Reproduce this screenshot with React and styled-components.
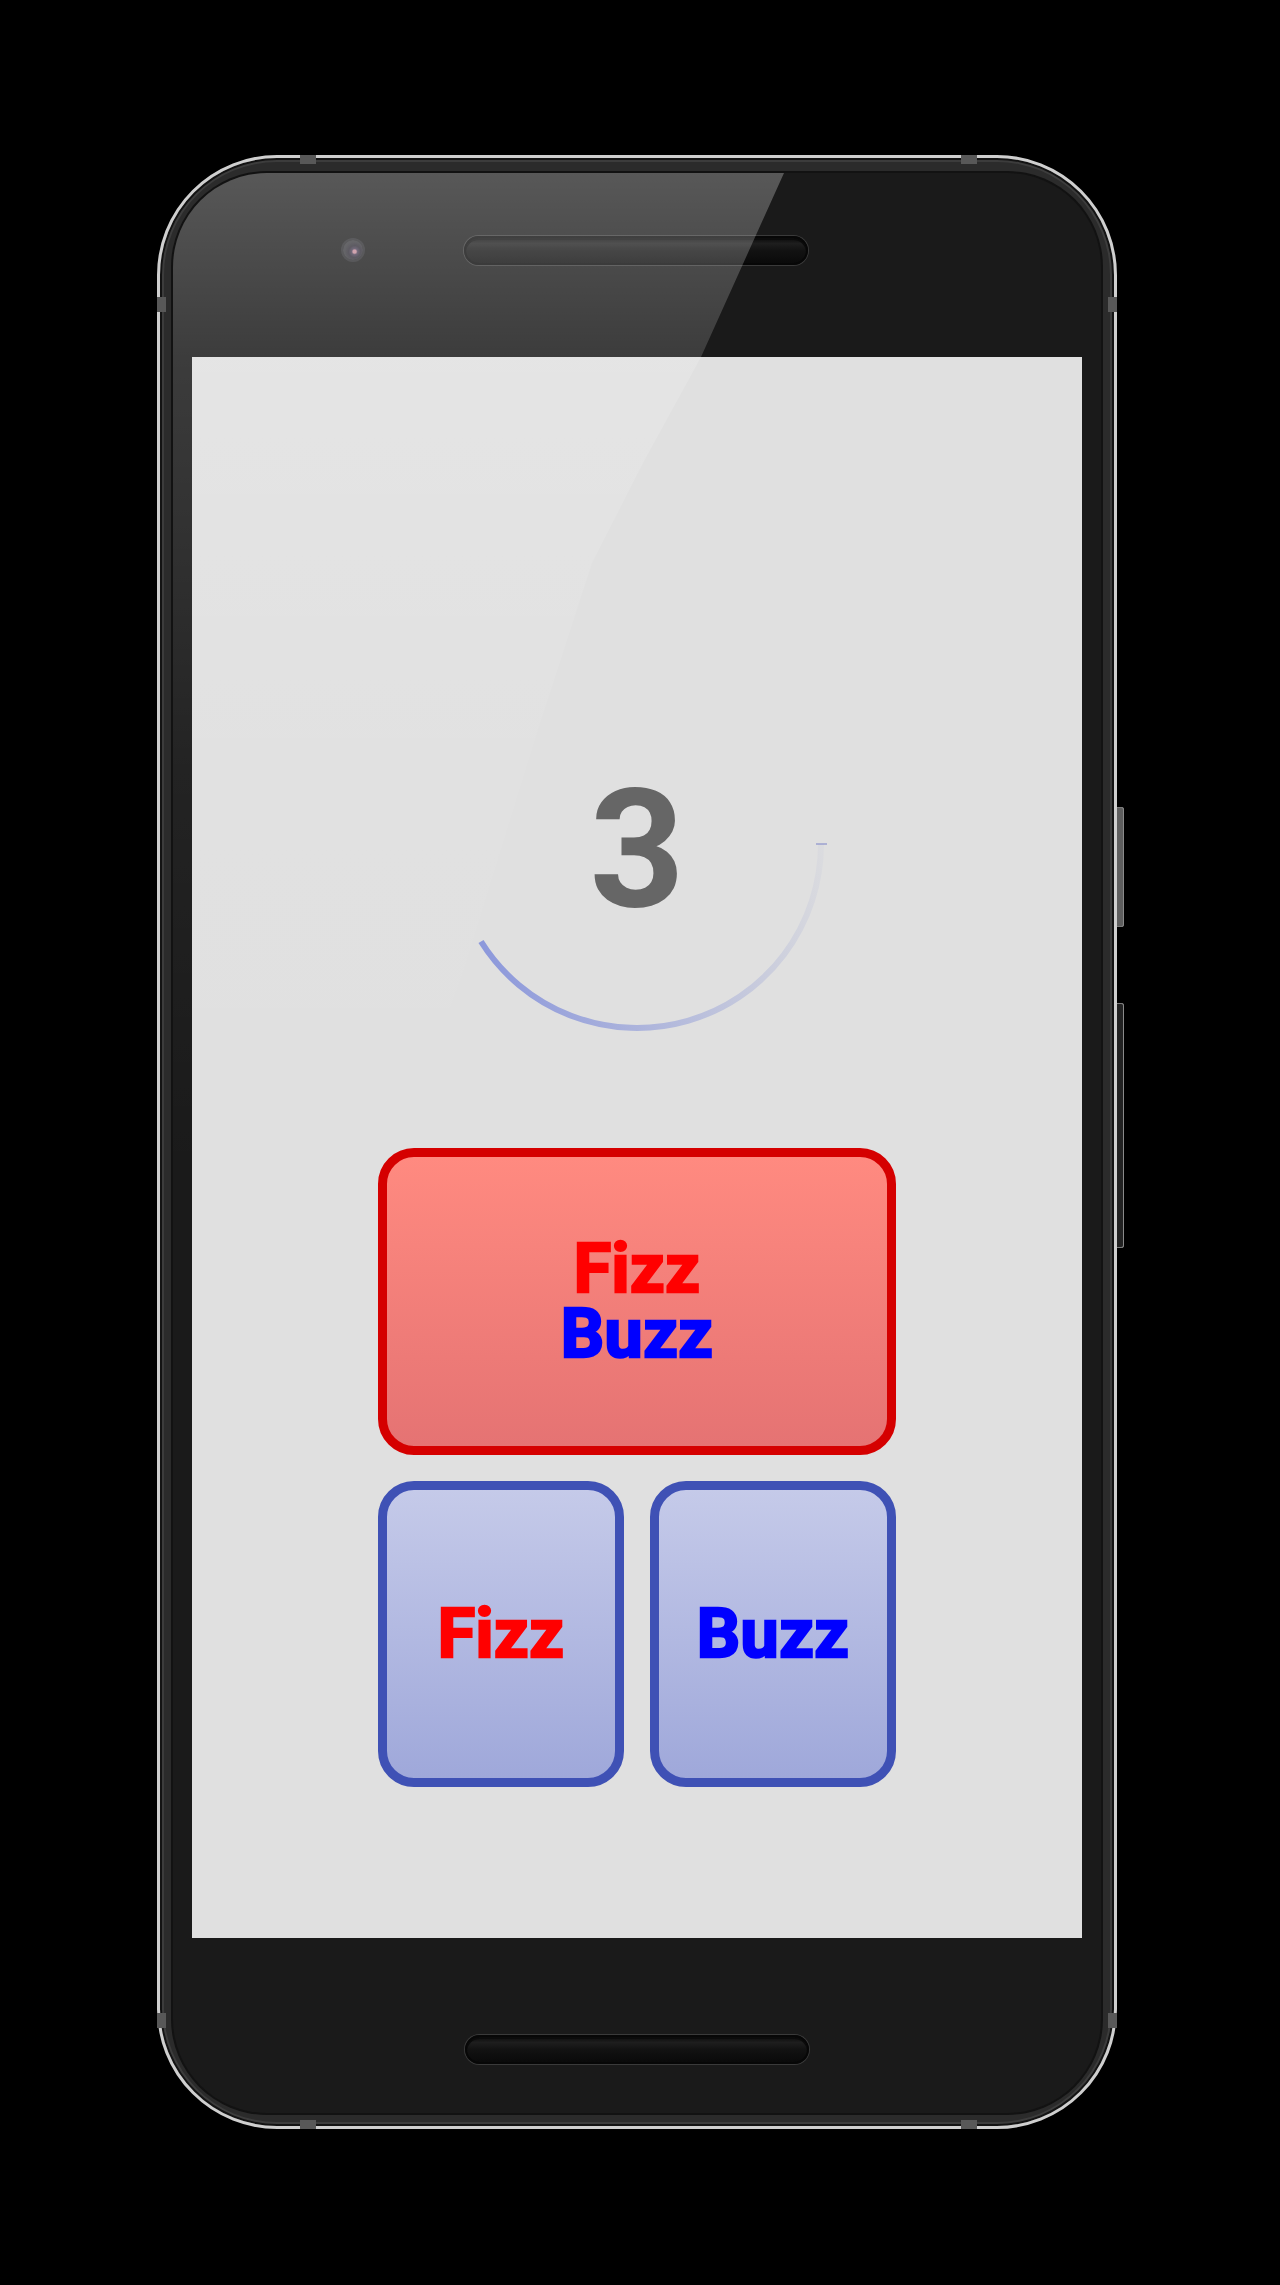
import React from "react";
import styled, { createGlobalStyle } from "styled-components";

const GlobalStyle = createGlobalStyle`
  html, body {
    margin: 0;
    padding: 0;
    background: #000;
  }
  body {
    font-family: Roboto, "Liberation Sans", sans-serif;
  }
`;

const Stage = styled.div`
  box-sizing: border-box;
  width: 1280px;
  height: 2285px;
  padding: 155px 0 0 157px;
  background: #000;
  overflow: hidden;
`;

/* Device shell: silver rim, dark band, glass front */
const Phone = styled.div`
  position: relative;
  box-sizing: border-box;
  width: 960px;
  height: 1974px;
  padding: 15px 13px 13px 13px;
  border: 3px solid #cfcfcf;
  border-radius: 120px;
  background: #2b2b2b;
  box-shadow: inset 0 0 0 2px #131313, inset 0 0 0 4px #3c3c3c;
`;

const RimNotch = styled.span`
  position: absolute;
  background: #585858;
  ${({ $side }) =>
    $side === "top" || $side === "bottom"
      ? `width: 16px; height: 9px; ${$side}: -3px;`
      : `width: 9px; height: 15px; ${$side}: -3px;`}
`;

const SideKey = styled.span`
  position: absolute;
  right: -10px;
  width: 7px;
  border-radius: 0 3px 3px 0;
  background: ${({ $solid }) => ($solid ? "#5e5e5e" : "#222")};
  box-shadow: inset -1px 0 0 #8a8a8a, inset 0 1px 0 #7a7a7a, inset 0 -1px 0 #7a7a7a;
`;

const Front = styled.div`
  position: relative;
  display: flex;
  flex-direction: column;
  height: 100%;
  border-radius: 94px;
  background: #1a1a1a;
  overflow: hidden;
  box-shadow: 0 0 0 2px #121212;
`;

/* diagonal glass reflection across the upper-left of the front */
const Gloss = styled.div`
  position: absolute;
  inset: 0;
  pointer-events: none;
  background: linear-gradient(
    180deg,
    rgba(255, 255, 255, 0.27) 0,
    rgba(255, 255, 255, 0.15) 184px,
    rgba(255, 255, 255, 0.04) 600px,
    rgba(255, 255, 255, 0) 1000px
  );
  clip-path: polygon(
    0 0,
    611px 0,
    528px 184px,
    470px 290px,
    419px 390px,
    361px 569px,
    290px 800px,
    180px 1100px,
    0 1400px
  );
`;

const TopBezel = styled.div`
  box-sizing: border-box;
  display: flex;
  align-items: flex-start;
  flex-shrink: 0;
  height: 184px;
  padding: 63px 0 0 170px;
`;

const Camera = styled.span`
  width: 20px;
  height: 20px;
  margin: 4px 101px 0 0;
  border-radius: 50%;
  background: radial-gradient(
    circle at 58% 58%,
    #c48a98 0 1.5px,
    #4a3f55 3px,
    #2f2c36 6px,
    #3a3a3e 10px
  );
  box-shadow: 0 0 0 2px rgba(80, 80, 90, 0.35);
`;

const Speaker = styled.span`
  box-sizing: border-box;
  width: 344px;
  height: 29px;
  border-radius: 15px;
  border: 2px solid #070707;
  background: linear-gradient(180deg, #0b0b0b 0, #1e1e1e 22%, #121212 50%, #0a0a0a 100%);
  box-shadow: 0 0 0 1px #3a3a3a, inset 0 2px 0 #0b0b0b;
`;

const Screen = styled.main`
  box-sizing: border-box;
  display: flex;
  flex-direction: column;
  align-items: center;
  flex-shrink: 0;
  height: 1581px;
  margin: 0 19px;
  padding-top: 297px;
  background: #e0e0e0;
`;

const BottomBezel = styled.div`
  display: flex;
  justify-content: center;
  align-items: flex-start;
  flex: 1;
  padding-top: 97px;
`;

const Timer = styled.div`
  display: grid;
  place-items: center;
  width: 380px;
  height: 380px;

  & > * {
    grid-area: 1 / 1;
  }
`;

const Count = styled.span`
  margin-top: 12px;
  font-family: Roboto, "Liberation Sans", sans-serif;
  font-size: 166px;
  font-weight: 700;
  line-height: 1;
  color: #666666;
`;

const Buttons = styled.div`
  display: grid;
  grid-template-columns: 246px 246px;
  gap: 26px;
  margin-top: 114px;
`;

const tones = {
  red: { border: "#d50000", top: "#ff8a80", bottom: "#e57373" },
  blue: { border: "#3f51b5", top: "#c5cae9", bottom: "#9fa8da" },
};

const AnswerButton = styled.button`
  box-sizing: border-box;
  display: flex;
  flex-direction: column;
  align-items: center;
  justify-content: center;
  grid-column: ${({ $wide }) => ($wide ? "1 / span 2" : "auto")};
  height: ${({ $wide }) => ($wide ? "307px" : "306px")};
  padding: 0;
  border: 9px solid ${({ $tone }) => tones[$tone].border};
  border-radius: 36px;
  background: linear-gradient(
    180deg,
    ${({ $tone }) => tones[$tone].top},
    ${({ $tone }) => tones[$tone].bottom}
  );
  cursor: pointer;
`;

const Word = styled.span`
  font-family: Roboto, "Liberation Sans", sans-serif;
  font-size: 68px;
  font-weight: 700;
  line-height: 65px;
  letter-spacing: 0.5px;
  color: ${({ $color }) => $color};
  -webkit-text-stroke: 2.5px ${({ $color }) => $color};
`;

const FIZZ = "#ff0000";
const BUZZ = "#0000ff";

function CountdownArc() {
  // ring centred at (190,190), r=184; drawn clockwise from 3 o'clock to 148°
  return (
    <svg width="380" height="380" viewBox="0 0 380 380" aria-hidden="true">
      <defs>
        <linearGradient
          id="arcFade"
          gradientUnits="userSpaceOnUse"
          x1="34"
          y1="287.5"
          x2="374"
          y2="190"
        >
          <stop offset="0" stopColor="#5a6dd8" stopOpacity="0.62" />
          <stop offset="0.45" stopColor="#6a7bd6" stopOpacity="0.38" />
          <stop offset="1" stopColor="#7a86cc" stopOpacity="0.05" />
        </linearGradient>
      </defs>
      <path
        d="M 374 190 A 184 184 0 0 1 34 287.5"
        fill="none"
        stroke="url(#arcFade)"
        strokeWidth="6"
      />
      <line x1="369" y1="190" x2="380" y2="190" stroke="#8a92cc" strokeWidth="1.2" />
    </svg>
  );
}

export default function App() {
  return (
    <>
      <GlobalStyle />
      <Stage>
        <Phone>
          <RimNotch $side="top" style={{ left: 140 }} />
          <RimNotch $side="top" style={{ left: 801 }} />
          <RimNotch $side="bottom" style={{ left: 140 }} />
          <RimNotch $side="bottom" style={{ left: 801 }} />
          <RimNotch $side="left" style={{ top: 139 }} />
          <RimNotch $side="right" style={{ top: 139 }} />
          <RimNotch $side="left" style={{ bottom: 98 }} />
          <RimNotch $side="right" style={{ bottom: 98 }} />
          <SideKey $solid style={{ top: 649, height: 120 }} />
          <SideKey style={{ top: 845, height: 245 }} />
          <Front>
            <TopBezel>
              <Camera />
              <Speaker />
            </TopBezel>
            <Screen>
              <Timer>
                <CountdownArc />
                <Count>3</Count>
              </Timer>
              <Buttons>
                <AnswerButton $wide $tone="red">
                  <Word $color={FIZZ}>Fizz</Word>
                  <Word $color={BUZZ}>Buzz</Word>
                </AnswerButton>
                <AnswerButton $tone="blue">
                  <Word $color={FIZZ}>Fizz</Word>
                </AnswerButton>
                <AnswerButton $tone="blue">
                  <Word $color={BUZZ}>Buzz</Word>
                </AnswerButton>
              </Buttons>
            </Screen>
            <BottomBezel>
              <Speaker />
            </BottomBezel>
            <Gloss />
          </Front>
        </Phone>
      </Stage>
    </>
  );
}
